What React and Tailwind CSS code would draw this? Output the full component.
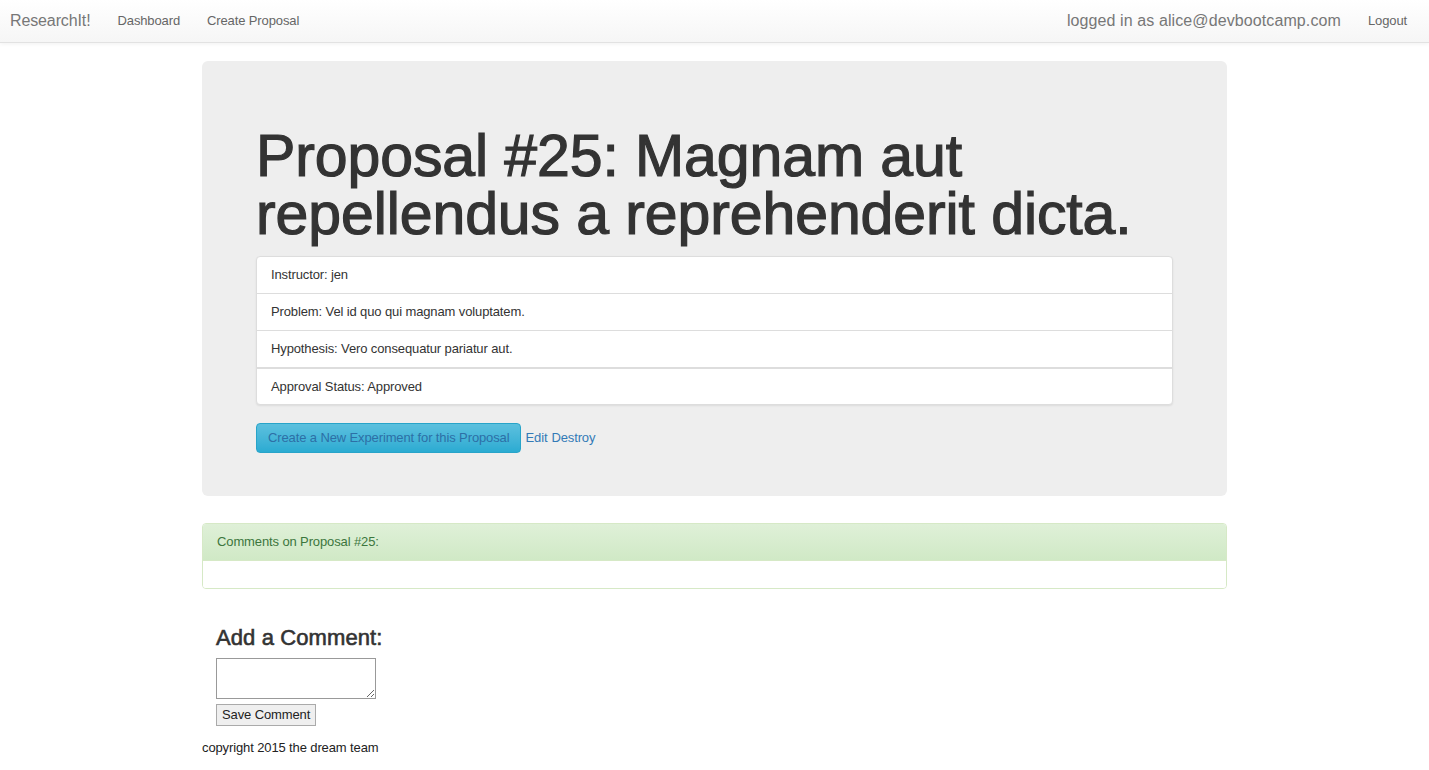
const items = [
  'Instructor: jen',
  'Problem: Vel id quo qui magnam voluptatem.',
  'Hypothesis: Vero consequatur pariatur aut.',
];

const Navbar = () => (
  <nav className="h-[43px] flex items-center justify-between border-b border-[#e2e2e2] bg-gradient-to-b from-white to-[#f6f6f6] shadow-[0_1px_4px_rgba(0,0,0,0.06)]">
    <div className="flex items-center">
      <a className="pl-[10px] pr-[27px] text-[16px] text-[#777]">ResearchIt!</a>
      <a className="pr-[27px] text-[13px] text-[#666]">Dashboard</a>
      <a className="text-[13px] text-[#666]">Create Proposal</a>
    </div>
    <div className="flex items-center">
      <span className="pr-[27px] text-[16px] text-[#777] tracking-[0.1px]">logged in as alice@devbootcamp.com</span>
      <a className="pr-[22px] text-[13px] text-[#666]">Logout</a>
    </div>
  </nav>
);

export default function App() {
  return (
    <div className="min-h-screen bg-white text-[13px] tracking-[-0.12px] text-[#333] font-['Liberation_Sans',Arial,sans-serif]">
      <Navbar />
      <div className="mx-auto w-[1025px] pt-[18px]">
        <div className="rounded-[6px] bg-[#eee] pt-[66px] pb-[43px] px-[54px]">
          <h1 className="text-[59px] leading-[58px] text-[#333] tracking-[-0.1px] [-webkit-text-stroke:1.2px_#333]">
            Proposal #25: Magnam aut repellendus a reprehenderit dicta.
          </h1>
          <div className="mt-[13px] rounded-[4px] bg-white border border-[#ddd] shadow-[0_1px_2px_rgba(0,0,0,0.08)]">
            {items.map((t) => (
              <div key={t} className="h-[37px] flex items-center px-[14px] border-b border-[#ddd]">{t}</div>
            ))}
            <div className="h-[36px] flex items-center px-[14px] border-t border-[#ddd]">Approval Status: Approved</div>
          </div>
          <div className="mt-[18px] flex items-center">
            <a className="h-[30px] flex items-center px-[11px] rounded-[4px] border border-[#28a4c9] bg-gradient-to-b from-[#5bc0de] to-[#2aabd2] text-[#2d6fa6]">
              Create a New Experiment for this Proposal
            </a>
            <a className="ml-[4px] text-[#337ab7]">Edit</a>
            <a className="ml-[4px] text-[#337ab7]">Destroy</a>
          </div>
        </div>

        <div className="mt-[27px] rounded-[4px] border border-[#d6e9c6] overflow-hidden">
          <div className="h-[37px] flex items-center px-[14px] border-b border-[#d6e9c6] bg-gradient-to-b from-[#dff0d8] to-[#d0e9c6] text-[#3c763d]">
            Comments on Proposal #25:
          </div>
          <div className="h-[27px] bg-white" />
        </div>

        <div className="pl-[14px] pt-[36px]">
          <h3 className="text-[22px] leading-[26px] text-[#333] tracking-[0.1px] [-webkit-text-stroke:0.6px_#333]">Add a Comment:</h3>
          <textarea className="mt-[7px] block w-[160px] h-[41px] border border-[#999] bg-white" />
          <button className="mt-[5px] block h-[22px] px-[5px] border border-[#aaa] bg-[#efefef] text-[13px] text-[#222]">
            Save Comment
          </button>
        </div>
        <p className="mt-[12px] text-[13px] text-[#222]">copyright 2015 the dream team</p>
      </div>
    </div>
  );
}
